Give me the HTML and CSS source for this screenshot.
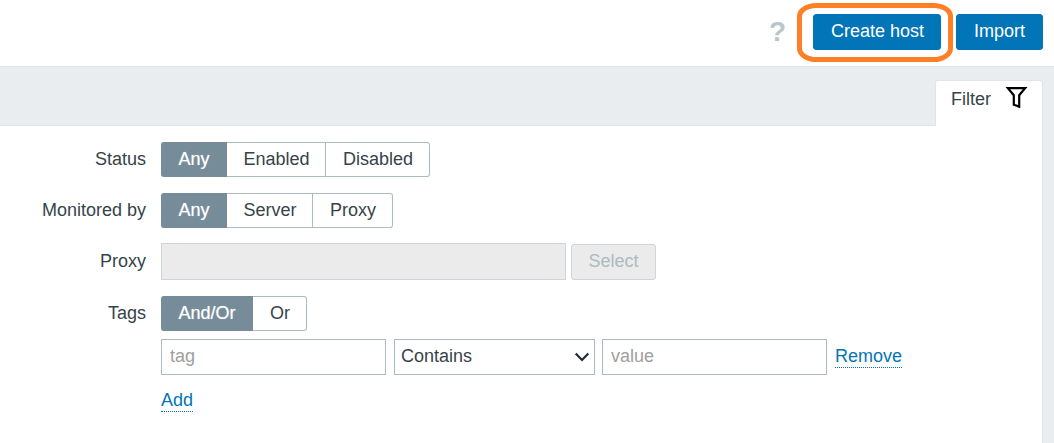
FILE: index.html
```html
<!DOCTYPE html>
<html lang="en">
<head>
<meta charset="utf-8">
<title>Hosts</title>
<link rel="stylesheet" href="styles.css">
</head>
<body>
<header class="header">
  <span class="help">?</span>
  <div class="create-wrap">
    <button class="btn btn-create">Create host</button>
    <svg class="highlight" width="158" height="64" viewBox="0 0 158 64"><rect x="3.5" y="5.5" width="151" height="54" rx="17" ry="11" fill="none" stroke="#ff7f27" stroke-width="5"/></svg>
  </div>
  <button class="btn btn-import">Import</button>
</header>
<main class="content">
  <div class="tabs">
    <div class="tab-line"></div>
    <div class="tab">
      <span>Filter</span>
      <svg class="funnel" width="24" height="24" viewBox="0 0 24 24"><path d="M2.9 2.2H20.1L14.2 9.2V20.6L8.8 18.8V9.2Z" fill="none" stroke="#000" stroke-width="2.2"/></svg>
    </div>
  </div>
  <form class="panel">
    <div class="row row-status">
      <label class="label">Status</label>
      <div class="segments"><span class="seg on w-any">Any</span><span class="seg w-enabled">Enabled</span><span class="seg w-disabled">Disabled</span></div>
    </div>
    <div class="row row-monitored">
      <label class="label">Monitored by</label>
      <div class="segments"><span class="seg on w-any">Any</span><span class="seg w-server">Server</span><span class="seg w-proxy">Proxy</span></div>
    </div>
    <div class="row row-proxy">
      <label class="label">Proxy</label>
      <div class="field field-disabled"></div>
      <button class="select-btn" type="button" disabled>Select</button>
    </div>
    <div class="row row-tags">
      <label class="label">Tags</label>
      <div class="segments"><span class="seg on w-andor">And/Or</span><span class="seg w-or">Or</span></div>
    </div>
    <div class="tag-row">
      <input class="field text" type="text" placeholder="tag">
      <div class="field dropdown"><span>Contains</span><svg width="16" height="12" viewBox="0 0 16 12"><path d="M1.7 2.5L8 9L14.3 2.5" fill="none" stroke="#1f2c33" stroke-width="2.2"/></svg></div>
      <input class="field text value" type="text" placeholder="value">
      <a class="link">Remove</a>
    </div>
    <div class="add-row"><a class="link">Add</a></div>
  </form>
</main>
</body>
</html>
```
FILE: styles.css
```css
* { box-sizing: border-box; }
body {
  margin: 0;
  height: 443px;
  overflow: hidden;
  background: #e9edf0;
  color: #36434a;
  font: 18px/20px "Liberation Sans", Arial, sans-serif;
  display: flex;
  flex-direction: column;
}
button, input { font: inherit; margin: 0; }
.header {
  height: 67px;
  flex: none;
  display: flex;
  justify-content: flex-end;
  padding: 14px 11px 0 0;
  background: #fff;
  border-bottom: 1px solid #dfe4e7;
}
.help {
  width: 17px;
  margin-right: 27px;
  color: #b9c5cd;
  font-size: 28px;
  font-weight: bold;
  line-height: 36px;
}
.create-wrap { position: relative; margin-right: 15px; height: 36px; }
.btn {
  height: 36px;
  padding: 0 0 2px;
  border: 1px solid #0275b8;
  border-radius: 3px;
  background: #0275b8;
  color: #fff;
}
.btn-create { width: 128px; display: block; padding-left: 1px; }
.btn-import { width: 87px; }
.highlight { position: absolute; left: -17px; top: -14px; }
.content {
  flex: 1;
  display: flex;
  flex-direction: column;
  padding: 13px 11px 0 0;
}
.tabs { display: flex; height: 46px; flex: none; }
.tab-line { flex: 1; border-bottom: 1px solid #dfe4e7; }
.tab {
  width: 108px;
  display: flex;
  padding: 8px 0 0 15px;
  background: #fff;
  border: 1px solid #dfe4e7;
  border-bottom: 0;
  border-radius: 3px 3px 0 0;
}
.funnel { margin: -3px 0 0 14px; }
.panel {
  flex: 1;
  background: #fff;
  border-right: 1px solid #dfe4e7;
  padding-top: 16px;
}
.row { display: flex; }
.row-status, .row-monitored { height: 51px; }
.row-proxy { height: 52px; }
.row-tags { height: 44px; }
.label { width: 146px; margin-right: 15px; text-align: right; padding-top: 7px; }
.segments { display: flex; height: 35px; }
.seg {
  border: 1px solid #acbbc2;
  border-left: 0;
  padding-left: 1px;
  text-align: center;
  line-height: 32px;
}
.seg.on {
  background: #768d99;
  border-color: #768d99;
  color: #fff;
  text-shadow: 0 0 1px rgba(255, 255, 255, .6);
}
.seg:first-child { border-radius: 3px 0 0 3px; }
.seg:last-child { border-radius: 0 3px 3px 0; }
.w-any { width: 66px; }
.w-enabled { width: 99px; }
.w-disabled { width: 104px; }
.w-server { width: 86px; }
.w-proxy { width: 80px; }
.w-andor { width: 92px; }
.w-or { width: 54px; }
.field { border: 1px solid #acbbc2; background: #fff; border-radius: 0; }
.field-disabled {
  width: 405px;
  height: 37px;
  margin: -1px 5px 0 0;
  background: #ebebeb;
  border-color: #ccd5d9;
}
.select-btn {
  width: 85px;
  height: 36px;
  padding: 0 0 2px;
  background: #ebebeb;
  border: 1px solid #ccd5d9;
  border-radius: 3px;
  color: #acbbc2;
}
.tag-row, .add-row { display: flex; padding-left: 161px; }
.tag-row { height: 44px; margin-top: -1px; }
.text { width: 225px; height: 36px; padding: 0 8px 2px; margin-right: 8px; color: inherit; }
.text::placeholder { color: #a0a0a0; opacity: 1; }
.dropdown {
  width: 201px;
  height: 36px;
  margin-right: 7px;
  padding: 0 4px 2px 6px;
  display: flex;
  align-items: center;
  justify-content: space-between;
}
.dropdown svg { margin-top: 2px; }
.link {
  color: #0275b8;
  height: 22px;
  border-bottom: 1px dotted #0275b8;
  margin-top: 7px;
}
```
